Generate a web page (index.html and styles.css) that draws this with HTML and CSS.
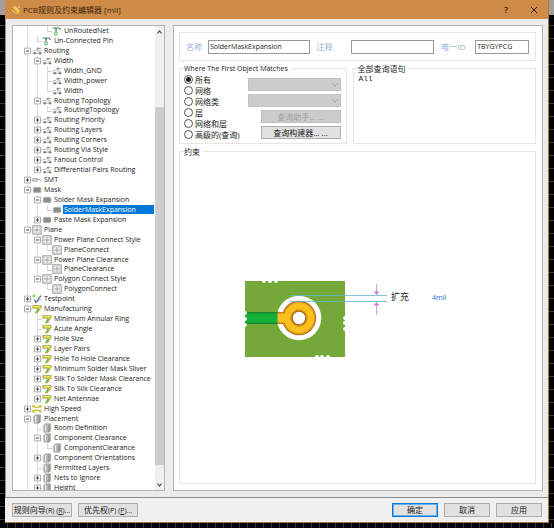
FILE: index.html
```html
<!DOCTYPE html>
<html lang="en">
<head>
<meta charset="utf-8">
<title>PCB规则及约束编辑器 [mil]</title>
<link rel="stylesheet" href="styles.css">
</head>
<body>
<svg class="defs" aria-hidden="true">
  <symbol id="plus" viewBox="0 0 10 10"><rect x="2.6" y="2.1" width="5.8" height="5.8" fill="#fff" stroke="#9c9c9c" stroke-width=".8"/><path d="M3.800 5h3.400M5.500 3.300v3.400" stroke="#333" stroke-width=".9"/></symbol>
  <symbol id="minus" viewBox="0 0 10 10"><rect x="2.6" y="2.1" width="5.8" height="5.8" fill="#fff" stroke="#9c9c9c" stroke-width=".8"/><path d="M3.800 5h3.400" stroke="#333" stroke-width=".9"/></symbol>
  <symbol id="net" viewBox="0 0 10 10"><path d="M.5 2h6.500L9 3.800M4 2v5" fill="none" stroke="#777" stroke-width="1.1"/><circle cx="4" cy="3" r="1.2" fill="#3fae5a"/><circle cx="4" cy="7.6" r="1.5" fill="#fff" stroke="#3fae5a"/></symbol>
  <symbol id="route" viewBox="0 0 10 10"><path d="M.5 7.200h9M.5 4.700h2.500L5.2 2.600H9.500M4.500 5h4.500" fill="none" stroke="#a2a2a2" stroke-width=".8"/><circle cx="2.800" cy="7.200" r="1.2" fill="#808080"/><circle cx="8" cy="7.200" r="1.2" fill="#808080"/><circle cx="6" cy="2.700" r="1.100" fill="#8c8c8c"/></symbol>
  <symbol id="smt" viewBox="0 0 10 10"><path d="M.8 3.6h4.4v2.6H.8zM5.2 4.2h2L9.6 6.5" fill="#ddd" stroke="#999" stroke-width=".8"/></symbol>
  <symbol id="mask" viewBox="0 0 10 10"><rect x="1.2" y="2.2" width="7.800" height="5.600" rx="1.3" fill="#8c8c8c" stroke="#c4c4c4" stroke-width=".7"/></symbol>
  <symbol id="plane" viewBox="0 0 10 10"><rect x=".7" y=".7" width="8.6" height="8.6" fill="#d8d8d8" stroke="#a8a8a8" stroke-width=".9"/><circle cx="5" cy="5" r="2.5" fill="#e9e9e9" stroke="#fff"/><path d="M5 2v6M2 5h6" stroke="#a2a2a2" stroke-width=".9"/></symbol>
  <symbol id="test" viewBox="0 0 10 10"><path d="M2.500 5.500l1.500 3L9 1.500" fill="none" stroke="#456" stroke-width="1.1"/><path d="M4 8.500l5-3.500" stroke="#89a" stroke-width=".7"/><path d="M2 .3v3.4M.4 2h3.2" stroke="#5bd03a" stroke-width="1.1"/></symbol>
  <symbol id="manu" viewBox="0 0 10 10"><path d="M.8 1.5h8.4v2L5.4 9H3.2L6 4.3H.8z" fill="#d9d62e" stroke="#8e8c4c" stroke-width=".6"/><path d="M2 2.5h6" stroke="#f5f08a" stroke-width=".8"/><path d="M6.6 4.6L4.7 8" stroke="#4cb87e" stroke-width="1.2"/></symbol>
  <symbol id="speed" viewBox="0 0 10 10"><path d="M1.5 2.2q3.5 2.4 7 0M1.5 7.4q3.5-2.4 7 0" fill="none" stroke="#c8c11e" stroke-width="1.3"/><g fill="#efe94c" stroke="#a9a224" stroke-width=".6"><circle cx="1.5" cy="2.2" r="1.1"/><circle cx="8.5" cy="2.2" r="1.1"/><circle cx="1.5" cy="7.4" r="1.1"/><circle cx="8.5" cy="7.4" r="1.1"/></g></symbol>
  <symbol id="place" viewBox="0 0 10 10"><path d="M2 2l1.6-1.2h5v6.6L7 9.2H2z" fill="#b0b0b0" stroke="#999" stroke-width=".6"/><path d="M3.6 1.8v6.8" stroke="#ededed" stroke-width="1.3"/><path d="M7 2v7" stroke="#7c7c7c" stroke-width=".8"/><path d="M.7 3h1.2M.7 5h1.2M.7 7h1.2" stroke="#999" stroke-width=".7"/></symbol>
</svg>
<div class="window">
  <header class="titlebar">
    <svg class="logo" viewBox="0 0 10 10" aria-hidden="true"><path d="M1 2.5L3.5 1 9 6.5 8 9 5 8z" fill="#f0c040"/><path d="M1.2 5l5 4M3.8 1.2l4.4 4.6" stroke="#fff2b8" stroke-width="1"/><path d="M1 3l5 5.5" stroke="#8b5a1a" stroke-width=".8"/><path d="M7 1l2 2.2" stroke="#e8d9b0" stroke-width="1"/></svg>
    <h1>PCB规则及约束编辑器 [mil]</h1>
    <button class="sys" aria-label="Help">?</button>
    <button class="sys" aria-label="Close"><svg viewBox="0 0 8 8"><path d="M1 1l6 6M7 1L1 7" stroke="#2a1a0c" stroke-width="1"/></svg></button>
  </header>
  <main class="client">
    <section class="tree">
      <ul class="rows" role="tree" aria-label="Rules">
        <li><i class="v"></i><i></i><i class="e"></i><svg><use href="#net"/></svg><span>UnRoutedNet</span></li>
        <li><i class="v"></i><i class="e"></i><svg><use href="#net"/></svg><span>Un-Connected Pin</span></li>
        <li><i class="t"><svg><use href="#minus"/></svg></i><svg><use href="#route"/></svg><span>Routing</span></li>
        <li><i class="v"></i><i class="t"><svg><use href="#minus"/></svg></i><svg><use href="#route"/></svg><span>Width</span></li>
        <li><i class="v"></i><i class="v"></i><i class="t"></i><svg><use href="#route"/></svg><span>Width_GND</span></li>
        <li><i class="v"></i><i class="v"></i><i class="t"></i><svg><use href="#route"/></svg><span>Width_power</span></li>
        <li><i class="v"></i><i class="v"></i><i class="e"></i><svg><use href="#route"/></svg><span>Width</span></li>
        <li><i class="v"></i><i class="t"><svg><use href="#minus"/></svg></i><svg><use href="#route"/></svg><span>Routing Topology</span></li>
        <li><i class="v"></i><i class="v"></i><i class="e"></i><svg><use href="#route"/></svg><span>RoutingTopology</span></li>
        <li><i class="v"></i><i class="t"><svg><use href="#plus"/></svg></i><svg><use href="#route"/></svg><span>Routing Priority</span></li>
        <li><i class="v"></i><i class="t"><svg><use href="#plus"/></svg></i><svg><use href="#route"/></svg><span>Routing Layers</span></li>
        <li><i class="v"></i><i class="t"><svg><use href="#plus"/></svg></i><svg><use href="#route"/></svg><span>Routing Corners</span></li>
        <li><i class="v"></i><i class="t"><svg><use href="#plus"/></svg></i><svg><use href="#route"/></svg><span>Routing Via Style</span></li>
        <li><i class="v"></i><i class="t"><svg><use href="#plus"/></svg></i><svg><use href="#route"/></svg><span>Fanout Control</span></li>
        <li><i class="v"></i><i class="e"><svg><use href="#plus"/></svg></i><svg><use href="#route"/></svg><span>Differential Pairs Routing</span></li>
        <li><i class="t"><svg><use href="#plus"/></svg></i><svg><use href="#smt"/></svg><span>SMT</span></li>
        <li><i class="t"><svg><use href="#minus"/></svg></i><svg><use href="#mask"/></svg><span>Mask</span></li>
        <li><i class="v"></i><i class="t"><svg><use href="#minus"/></svg></i><svg><use href="#mask"/></svg><span>Solder Mask Expansion</span></li>
        <li class="selected"><i class="v"></i><i class="v"></i><i class="e"></i><svg><use href="#mask"/></svg><span>SolderMaskExpansion</span></li>
        <li><i class="v"></i><i class="e"><svg><use href="#plus"/></svg></i><svg><use href="#mask"/></svg><span>Paste Mask Expansion</span></li>
        <li><i class="t"><svg><use href="#minus"/></svg></i><svg><use href="#plane"/></svg><span>Plane</span></li>
        <li><i class="v"></i><i class="t"><svg><use href="#minus"/></svg></i><svg><use href="#plane"/></svg><span>Power Plane Connect Style</span></li>
        <li><i class="v"></i><i class="v"></i><i class="e"></i><svg><use href="#plane"/></svg><span>PlaneConnect</span></li>
        <li><i class="v"></i><i class="t"><svg><use href="#minus"/></svg></i><svg><use href="#plane"/></svg><span>Power Plane Clearance</span></li>
        <li><i class="v"></i><i class="v"></i><i class="e"></i><svg><use href="#plane"/></svg><span>PlaneClearance</span></li>
        <li><i class="v"></i><i class="e"><svg><use href="#minus"/></svg></i><svg><use href="#plane"/></svg><span>Polygon Connect Style</span></li>
        <li><i class="v"></i><i></i><i class="e"></i><svg><use href="#plane"/></svg><span>PolygonConnect</span></li>
        <li><i class="t"><svg><use href="#plus"/></svg></i><svg><use href="#test"/></svg><span>Testpoint</span></li>
        <li><i class="t"><svg><use href="#minus"/></svg></i><svg><use href="#manu"/></svg><span>Manufacturing</span></li>
        <li><i class="v"></i><i class="t"></i><svg><use href="#manu"/></svg><span>Minimum Annular Ring</span></li>
        <li><i class="v"></i><i class="t"></i><svg><use href="#manu"/></svg><span>Acute Angle</span></li>
        <li><i class="v"></i><i class="t"><svg><use href="#plus"/></svg></i><svg><use href="#manu"/></svg><span>Hole Size</span></li>
        <li><i class="v"></i><i class="t"><svg><use href="#plus"/></svg></i><svg><use href="#manu"/></svg><span>Layer Pairs</span></li>
        <li><i class="v"></i><i class="t"><svg><use href="#plus"/></svg></i><svg><use href="#manu"/></svg><span>Hole To Hole Clearance</span></li>
        <li><i class="v"></i><i class="t"><svg><use href="#plus"/></svg></i><svg><use href="#manu"/></svg><span>Minimum Solder Mask Sliver</span></li>
        <li><i class="v"></i><i class="t"><svg><use href="#plus"/></svg></i><svg><use href="#manu"/></svg><span>Silk To Solder Mask Clearance</span></li>
        <li><i class="v"></i><i class="t"><svg><use href="#plus"/></svg></i><svg><use href="#manu"/></svg><span>Silk To Silk Clearance</span></li>
        <li><i class="v"></i><i class="e"><svg><use href="#plus"/></svg></i><svg><use href="#manu"/></svg><span>Net Antennae</span></li>
        <li><i class="t"><svg><use href="#plus"/></svg></i><svg><use href="#speed"/></svg><span>High Speed</span></li>
        <li><i class="t"><svg><use href="#minus"/></svg></i><svg><use href="#place"/></svg><span>Placement</span></li>
        <li><i class="v"></i><i class="t"></i><svg><use href="#place"/></svg><span>Room Definition</span></li>
        <li><i class="v"></i><i class="t"><svg><use href="#minus"/></svg></i><svg><use href="#place"/></svg><span>Component Clearance</span></li>
        <li><i class="v"></i><i class="v"></i><i class="e"></i><svg><use href="#place"/></svg><span>ComponentClearance</span></li>
        <li><i class="v"></i><i class="t"><svg><use href="#plus"/></svg></i><svg><use href="#place"/></svg><span>Component Orientations</span></li>
        <li><i class="v"></i><i class="t"></i><svg><use href="#place"/></svg><span>Permitted Layers</span></li>
        <li><i class="v"></i><i class="t"><svg><use href="#plus"/></svg></i><svg><use href="#place"/></svg><span>Nets to Ignore</span></li>
        <li><i class="v"></i><i class="e"><svg><use href="#plus"/></svg></i><svg><use href="#place"/></svg><span>Height</span></li>
      </ul>
      <div class="scrollbar" aria-hidden="true">
        <svg viewBox="0 0 9 12"><path d="M2.5 7.5l2-2.5 2 2.5" fill="none" stroke="#444" stroke-width="1.2"/></svg>
        <div class="track"><div class="thumb"></div></div>
        <svg viewBox="0 0 9 12"><path d="M2.5 5.5l2 2.5 2-2.5" fill="none" stroke="#444" stroke-width="1.2"/></svg>
      </div>
    </section>
    <section class="editor">
      <div class="identity">
        <label for="name">名称</label><input id="name" type="text" value="SolderMaskExpansion">
        <label for="note">注释</label><input id="note" type="text">
        <label for="uid">唯一ID</label><input id="uid" type="text" value="TBYGYPCG">
      </div>
      <div class="query">
        <fieldset class="match">
          <legend class="latin">Where The First Object Matches</legend>
          <div class="match-body">
            <div class="radios">
              <label><input type="radio" name="scope" checked>所有</label>
              <label><input type="radio" name="scope">网络</label>
              <label><input type="radio" name="scope">网络类</label>
              <label><input type="radio" name="scope">层</label>
              <label><input type="radio" name="scope">网络和层</label>
              <label><input type="radio" name="scope">高级的(查询)</label>
            </div>
            <div class="controls">
              <div class="drop"><select aria-label="网络" disabled></select><svg viewBox="0 0 6 4"><path d="M.5 .5L3 3l2.500-2.500" fill="none" stroke="#a2a2a2"/></svg></div>
              <div class="drop"><select aria-label="网络类" disabled></select><svg viewBox="0 0 6 4"><path d="M.5 .5L3 3l2.500-2.500" fill="none" stroke="#a2a2a2"/></svg></div>
              <button class="btn" disabled>查询助手... ...</button>
              <button class="btn">查询构建器... ...</button>
            </div>
          </div>
        </fieldset>
        <fieldset class="full">
          <legend>全部查询语句</legend>
          <p class="code">All</p>
        </fieldset>
      </div>
      <fieldset class="constraint">
        <legend>约束</legend>
        <div class="diagram">
          <svg class="board" viewBox="0 0 144 77" role="img" aria-label="Solder mask expansion">
            <defs>
              <linearGradient id="trk" x1="0" y1="0" x2="0" y2="1"><stop offset="0" stop-color="#1c7d2c"/><stop offset=".2" stop-color="#14b03a"/><stop offset=".8" stop-color="#14b03a"/><stop offset="1" stop-color="#1c7d2c"/></linearGradient>
              <radialGradient id="pad"><stop offset=".38" stop-color="#a8641a"/><stop offset=".54" stop-color="#fdbf1c"/><stop offset=".84" stop-color="#fdbf1c"/><stop offset="1" stop-color="#a8641a"/></radialGradient>
              <linearGradient id="neck" x1="0" y1="0" x2="0" y2="1"><stop offset="0" stop-color="#b87318"/><stop offset=".22" stop-color="#fdbf1c"/><stop offset=".78" stop-color="#fdbf1c"/><stop offset="1" stop-color="#b87318"/></linearGradient>
            </defs>
            <rect width="100" height="76" fill="#74a838"/>
            <circle cx="54" cy="37" r="22.300" fill="#fff"/>
            <rect y="31" width="33" height="12" fill="url(#trk)"/>
            <circle cx="54" cy="37" r="17.200" fill="url(#pad)"/>
            <rect x="32.500" y="31" width="7.500" height="12" fill="url(#neck)"/>
            <circle cx="54" cy="37" r="6.200" fill="#fff"/>
            <g fill="#fff"><circle cx="19" cy="0" r="1.900"/><circle cx="25" cy="0" r="1.900"/><circle cx="31" cy="0" r="1.900"/><circle cx="72" cy="76" r="1.900"/><circle cx="77" cy="76" r="1.900"/><circle cx="83" cy="76" r="1.900"/><circle cx="0" cy="32" r="1.900"/><circle cx="0" cy="38" r="1.900"/><circle cx="0" cy="44" r="1.900"/><circle cx="100" cy="37" r="1.900"/><circle cx="100" cy="42" r="1.900"/><circle cx="100" cy="48" r="1.900"/></g>
            <path d="M45 14.500h97M45 20.500h97" stroke="#5fb6cf" stroke-width=".8"/>
            <path d="M131.500 3v9M131.500 23v11" stroke="#d2a2de" stroke-width="1"/>
            <path d="M128.500 10.500h6l-3 3.500zM128.500 24.500h6l-3-3.500z" fill="#c27fd3"/>
          </svg>
          <span class="caption">扩充</span>
          <a class="value" href="#">4mil</a>
        </div>
      </fieldset>
    </section>
  </main>
  <footer class="actions">
    <button class="btn wide">规则向导<small>(R) (<u>R</u>)...</small></button>
    <button class="btn wide">优先权<small>(P) (<u>P</u>)...</small></button>
    <span class="space"></span>
    <button class="btn primary">确定</button>
    <button class="btn">取消</button>
    <button class="btn">应用</button>
  </footer>
</div>
</body>
</html>
```
FILE: styles.css
```css
* { box-sizing: border-box; }
body {
  margin: 0;
  min-height: 100vh;
  display: flex;
  padding: 0 5px 5px;
  background:
    linear-gradient(#a39d9b, #a39d9b) 0 0 / 100% 15px no-repeat,
    repeating-linear-gradient(90deg, #000 0 7px, #34323a 7px 8px) 0 100% / 100% 5px no-repeat,
    repeating-linear-gradient(#000 0 12px, #3a3a3a 12px 13px);
  font: 8px/10px "Open Sans", "Noto Sans CJK SC", sans-serif;
  color: #222;
}
.defs { position: absolute; width: 0; height: 0; }
button, input, select { font: inherit; color: inherit; }
.window {
  flex: 1;
  min-width: 0;
  display: flex;
  flex-direction: column;
  background: #f0f0f0;
  border: 0 solid #a5784a;
  border-width: 0 1px 1px 0;
}
.titlebar {
  height: 19px;
  display: flex;
  align-items: center;
  padding: 0 4px 0 6px;
  background: #cf8c48;
}
.logo { width: 10px; height: 10px; }
h1 {
  flex: 1;
  margin: 0 0 0 2px;
  font-size: 8px;
  line-height: 12px;
  font-weight: 400;
  color: #38240f;
}
.sys {
  width: 20px;
  height: 16px;
  margin-left: 8px;
  padding: 0;
  border: 0;
  background: none;
  font-size: 9px;
  font-weight: 600;
  line-height: 16px;
  color: #2a1a0c;
}
.sys svg { width: 8px; height: 8px; display: block; margin: 0 auto; }
.client {
  flex: 1;
  display: flex;
  gap: 8px;
  padding: 6px 5px 6px 6px;
  border-left: 1px solid #7f97a8;
  border-bottom: 1px solid #8d8d8d;
  background: #ececec;
}
.tree {
  width: 153px;
  display: flex;
  overflow: hidden;
  background: #fff;
  border: 1px solid #b4b4b4;
}
.rows {
  flex: 1;
  min-width: 0;
  margin: 0 0 -3px;
  padding: 0 1px 0 9px;
  list-style: none;
  display: flex;
  flex-direction: column;
  font-size: 7px;
}
.rows li { flex: 1 0 0; min-height: 0; display: flex; align-items: center; }
.rows li > svg { flex: none; width: 10px; height: 10px; margin-right: 1px; }
.rows i {
  flex: none;
  width: 10px;
  align-self: stretch;
  display: flex;
  align-items: center;
  background: no-repeat;
}
.rows i svg { width: 10px; height: 10px; }
.rows .v { background-image: linear-gradient(#dcdcdc, #dcdcdc); background-size: 1px 100%; background-position: 5px 0; }
.rows .t {
  background-image: linear-gradient(#dcdcdc, #dcdcdc), linear-gradient(#d0d0d0, #d0d0d0);
  background-size: 1px 100%, 5px 1px;
  background-position: 5px 0, 5px 5px;
}
.rows .e {
  background-image: linear-gradient(#dcdcdc, #dcdcdc), linear-gradient(#d0d0d0, #d0d0d0);
  background-size: 1px 5px, 5px 1px;
  background-position: 5px 0, 5px 5px;
}
.rows span { flex: 1; padding-left: 1px; white-space: nowrap; line-height: 8px; }
.rows .selected span { background: #0078d7; color: #fff; line-height: 9px; }
.scrollbar { width: 9px; display: flex; flex-direction: column; background: #f0f0f0; }
.scrollbar svg { width: 9px; height: 12px; }
.track { flex: 1; display: flex; flex-direction: column; padding: 69px 0 13px; }
.thumb { flex: 1; background: #cdcdcd; }
.editor {
  flex: 1;
  min-width: 0;
  display: flex;
  flex-direction: column;
  gap: 2px;
  padding: 6px 6px 6px 5px;
  background: #fff;
  border: 1px solid #b4b4b4;
}
.identity {
  height: 29px;
  display: grid;
  grid-template-columns: 22px 102fr 41px 84fr 41px 54fr;
  align-items: center;
  padding: 0 6px;
  border: 1px solid #e6e6e6;
}
.identity label { color: #93b1cf; }
.identity input + label { padding-left: 7px; }
.identity input {
  width: 100%;
  min-width: 0;
  height: 14px;
  padding: 0 1px;
  border: 1px solid #999;
  background: #fff;
  font-size: 7px;
  color: #222;
}
.query { display: grid; grid-template-columns: 168fr 184fr; gap: 6px; }
fieldset { margin: 0; padding: 0 4px; min-width: 0; border: 1px solid #e6e6e6; }
legend { padding: 0 3px 0 0; line-height: 11px; }
.latin { font-size: 7px; }
.match-body { display: flex; justify-content: space-between; padding: 0 1px 3px 0; }
.radios label { display: flex; align-items: center; height: 11px; white-space: nowrap; }
.radios input {
  appearance: none;
  width: 9px;
  height: 9px;
  margin: 0 2px 0 0;
  border: 1px solid #555;
  border-radius: 50%;
  background: #fff;
}
.radios input:checked { background: radial-gradient(circle, #222 0 2px, #fff 3px); }
.controls { width: 93px; display: flex; flex-direction: column; align-items: flex-end; gap: 3px; padding-top: 4px; }
.drop { position: relative; width: 100%; height: 13px; }
.drop select {
  appearance: none;
  display: block;
  width: 100%;
  height: 13px;
  border: 1px solid #c2c2c2;
  border-radius: 0;
  background: #ccc;
  opacity: 1;
}
.drop svg { position: absolute; right: 3px; top: 5px; width: 6px; height: 4px; }
.btn {
  width: 46px;
  height: 14px;
  padding: 0;
  border: 1px solid #adadad;
  background: #e1e1e1;
  line-height: 10px;
  white-space: nowrap;
}
.controls .btn { width: 80px; height: 13px; }
.btn:disabled { background: #ccc; border-color: #bfbfbf; color: #a0a0a0; }
.code { margin: 0; padding: 0 1px; font: 8px/10px "Liberation Mono", monospace; }
.constraint { flex: 1; }
.diagram { display: flex; align-items: flex-start; padding: 124px 0 0 61px; }
.board { flex: none; width: 144px; height: 77px; }
.caption { margin: 11px 23px 0 2px; font-size: 9px; }
.value { margin-top: 12px; font-size: 7px; color: #1c6fd6; text-decoration: none; }
.actions { height: 24px; display: flex; align-items: center; gap: 6px; padding: 0 6px 0 7px; }
.wide { width: 60px; }
.space { flex: 1; }
small { font-size: 7px; }
.primary { border: 1px solid #0078d7; outline: 1px solid #69aee6; outline-offset: -2px; }
```
